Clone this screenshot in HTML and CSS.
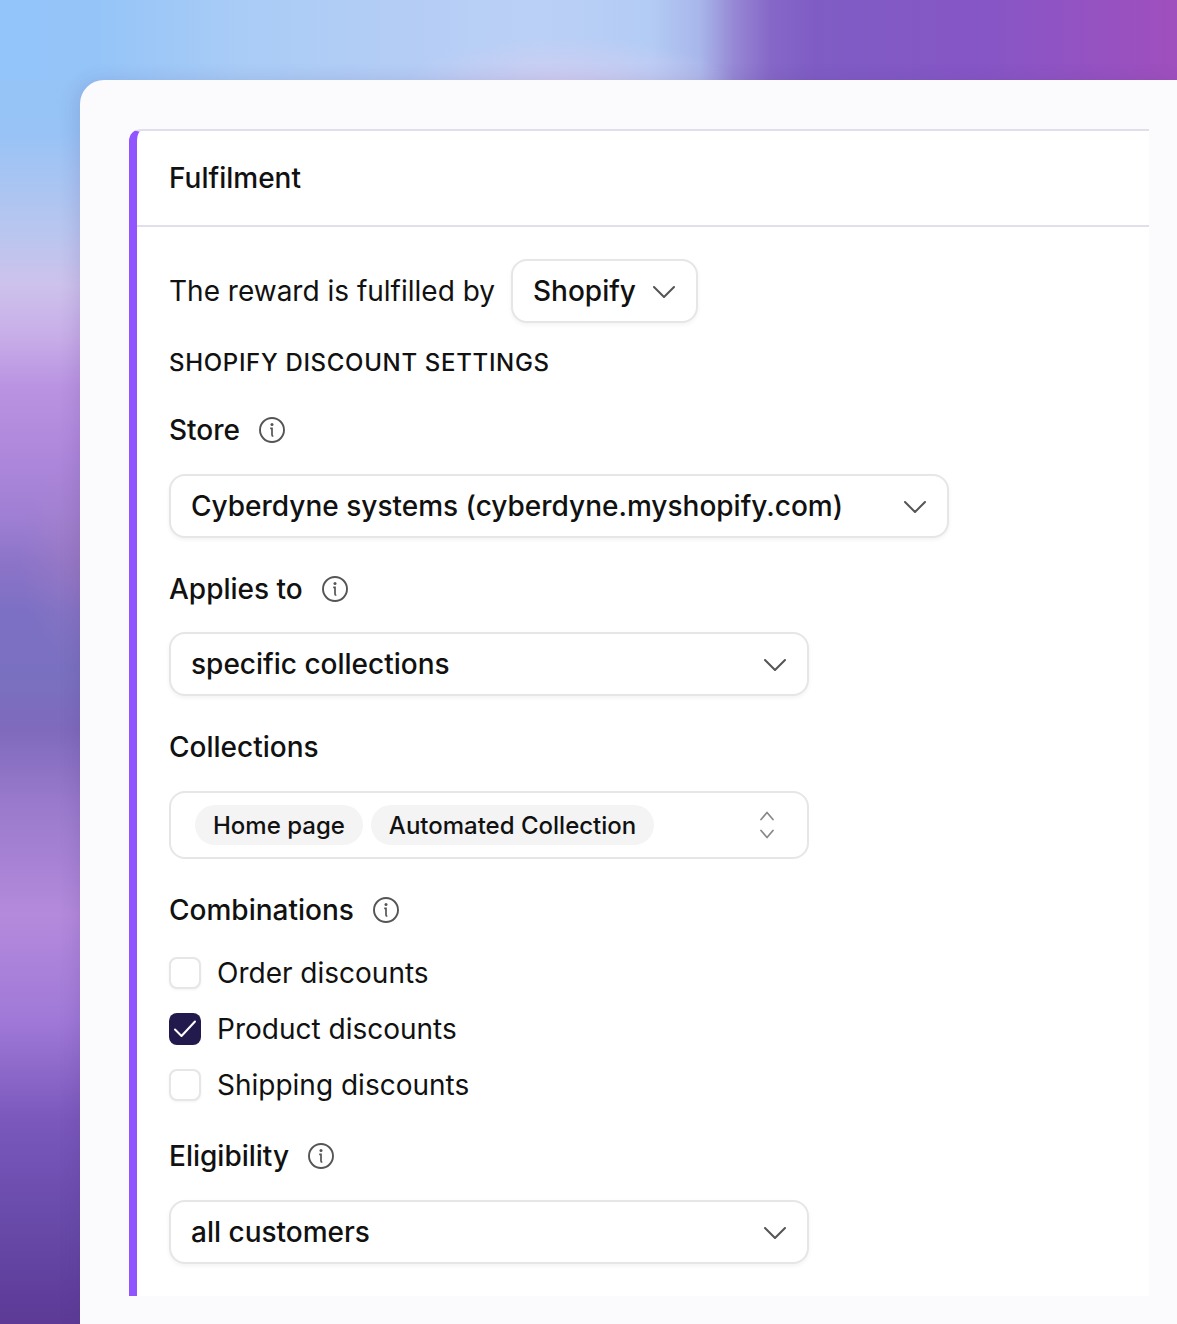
FILE: index.html
```html
<!DOCTYPE html>
<html lang="en">
<head>
<meta charset="utf-8">
<title>Fulfilment</title>
<link rel="stylesheet" href="styles.css">
</head>
<body>
<svg class="defs" width="0" height="0" aria-hidden="true">
  <symbol id="chev" viewBox="0 0 22 12"><path d="M1 1l10 10L21 1" fill="none" stroke="currentColor" stroke-width="2" stroke-linecap="round" stroke-linejoin="round"/></symbol>
  <symbol id="info" viewBox="0 0 26 26"><circle cx="13" cy="13" r="12" fill="none" stroke="currentColor" stroke-width="1.9"/><circle cx="13" cy="7.6" r="1.5" fill="currentColor"/><path d="M11.2 11.4H13v6.6c0 .8.4 1.2 1.3 1.2" fill="none" stroke="currentColor" stroke-width="1.7"/></symbol>
</svg>
<main class="card">
  <section class="panel">
    <h2 class="panel-title">Fulfilment</h2>
    <div class="panel-body">
      <div class="inline-row">
        <span class="text">The reward is fulfilled by</span>
        <div class="select select-inline"><span>Shopify</span><svg class="chev"><use href="#chev"/></svg></div>
      </div>
      <h3 class="section-title">SHOPIFY DISCOUNT SETTINGS</h3>

      <div class="label first"><span>Store</span><svg class="info"><use href="#info"/></svg></div>
      <div class="select w-store"><span>Cyberdyne systems (cyberdyne.myshopify.com)</span><svg class="chev"><use href="#chev"/></svg></div>

      <div class="label next"><span>Applies to</span><svg class="info"><use href="#info"/></svg></div>
      <div class="select w-std"><span>specific collections</span><svg class="chev"><use href="#chev"/></svg></div>

      <div class="label next wide"><span>Collections</span></div>
      <div class="multi w-std">
        <span class="chip">Home page</span>
        <span class="chip">Automated Collection</span>
        <svg class="updown" viewBox="0 0 16 28"><path d="M2 8.5l6-7 6 7M2 19.5l6 7 6-7" fill="none" stroke="currentColor" stroke-width="1.7" stroke-linecap="round" stroke-linejoin="round"/></svg>
      </div>

      <div class="label next"><span>Combinations</span><svg class="info"><use href="#info"/></svg></div>
      <ul class="checks">
        <li class="check"><span class="box"></span>Order discounts</li>
        <li class="check"><span class="box on"><svg viewBox="0 0 32 32"><path d="M6 16.5l6.5 6.5L26 8.5" fill="none" stroke="#fff" stroke-width="2" stroke-linecap="round" stroke-linejoin="round"/></svg></span>Product discounts</li>
        <li class="check"><span class="box"></span>Shipping discounts</li>
      </ul>

      <div class="label tall"><span>Eligibility</span><svg class="info"><use href="#info"/></svg></div>
      <div class="select w-std"><span>all customers</span><svg class="chev"><use href="#chev"/></svg></div>
    </div>
  </section>
</main>
</body>
</html>
```

FILE: styles.css
```css
* { box-sizing: border-box; }
html, body { margin: 0; height: 1324px; overflow: hidden; }
body {
  width: 1177px;
  font-family: Inter, "Liberation Sans", sans-serif;
  color: #111;
  padding: 80px 0 0 80px;
  background:
    radial-gradient(ellipse 170px 55px at 570px 92px, rgba(218,205,240,.85), rgba(218,205,240,0)),
    radial-gradient(ellipse 70px 110px at 90px 560px, rgba(182,132,190,.35), rgba(182,132,190,0)),
    linear-gradient(90deg, #94c5fa 0, #94c4f8 90px, #a9ccf6 240px, #b4cdf5 400px, #bbd0f6 540px, #b3ccf5 650px, #a8b6ea 700px, #9686d4 735px, #8668c8 770px, #7f5cc4 815px, #8656c6 980px, #a04fbe 1177px) 0 0 / 100% 80px no-repeat,
    linear-gradient(180deg, #94c5f8 0, #97c3f6 130px, #b8c6ef 230px, #cdc2ec 285px, #c8aee8 335px, #ba94e2 385px, #b088dc 447px, #a080d4 513px, #8c74c8 563px, #7c70c4 613px, #7a70c0 680px, #7f6abc 730px, #9a7acc 805px, #b48adc 915px, #a079d8 1020px, #7a58bc 1120px, #6a4cac 1210px, #5c3a96 1324px);
}
.defs { position: absolute; }
.card {
  width: 1097px;
  height: 1244px;
  padding: 49px 28px 28px 49px;
  background: #fbfbfd;
  border-radius: 24px 0 0 0;
  box-shadow: -4px 0 18px rgba(70,50,130,.14);
}
.panel {
  height: 1167px;
  background: #fff;
  border-top: 2px solid #e2deec;
  border-left: 8px solid #9155ff;
  border-radius: 12px 0 0 0;
}
.panel-title {
  margin: 0;
  height: 96px;
  padding: 0 32px;
  display: flex;
  align-items: center;
  font-size: 28px;
  font-weight: 500;
  border-bottom: 2px solid #e2deec;
}
.panel-body { padding: 32px; }
.inline-row { display: flex; align-items: center; gap: 16px; }
.text { font-size: 28px; }
.select {
  height: 64px;
  display: flex;
  align-items: center;
  justify-content: space-between;
  padding: 0 21px 0 20px;
  font-size: 28px;
  font-weight: 500;
  background: #fff;
  border: 2px solid #e6e6e6;
  border-radius: 16px;
  box-shadow: 0 2px 4px rgba(0,0,0,.05);
}
.select-inline { gap: 17px; }
.w-store { width: 780px; }
.w-std { width: 640px; }
.chev { width: 22px; height: 12px; color: #555; flex: none; margin-top: 1px; }
.section-title {
  margin: 24px 0 30px;
  height: 32px;
  line-height: 32px;
  font-size: 24px;
  font-weight: 500;
  letter-spacing: .68px;
}
.label {
  height: 41px;
  margin-bottom: 23px;
  display: flex;
  align-items: center;
  gap: 19px;
  font-size: 28px;
  font-weight: 500;
}
.label.first { margin-bottom: 24px; }
.label.next { margin-top: 30px; }
.label.wide { margin-top: 31px; height: 40px; margin-bottom: 24px; }
.label.tall { height: 40px; margin-bottom: 24px; }
.info { width: 26px; height: 26px; color: #555; }
.multi {
  position: relative;
  height: 68px;
  display: flex;
  align-items: center;
  gap: 8px;
  padding: 0 24px;
  background: #fff;
  border: 2px solid #e6e6e6;
  border-radius: 16px;
}
.chip {
  height: 40px;
  display: flex;
  align-items: center;
  padding: 0 18px;
  font-size: 24px;
  font-weight: 500;
  background: #f4f4f4;
  border-radius: 20px;
}
.updown {
  width: 16px;
  height: 28px;
  margin-left: auto;
  margin-right: 8px;
  color: #888;
}
.checks {
  list-style: none;
  margin: 27px 0 35px;
  padding: 0;
  display: flex;
  flex-direction: column;
  gap: 24px;
}
.check {
  height: 32px;
  display: flex;
  align-items: center;
  gap: 16px;
  font-size: 28px;
}
.box {
  width: 32px;
  height: 32px;
  background: #fff;
  border: 2px solid #e6e6e6;
  border-radius: 8px;
  box-shadow: 0 1px 3px rgba(0,0,0,.05);
}
.box.on { background: #221a4d; border: 0; box-shadow: none; }
.box svg { display: block; width: 32px; height: 32px; }
```
